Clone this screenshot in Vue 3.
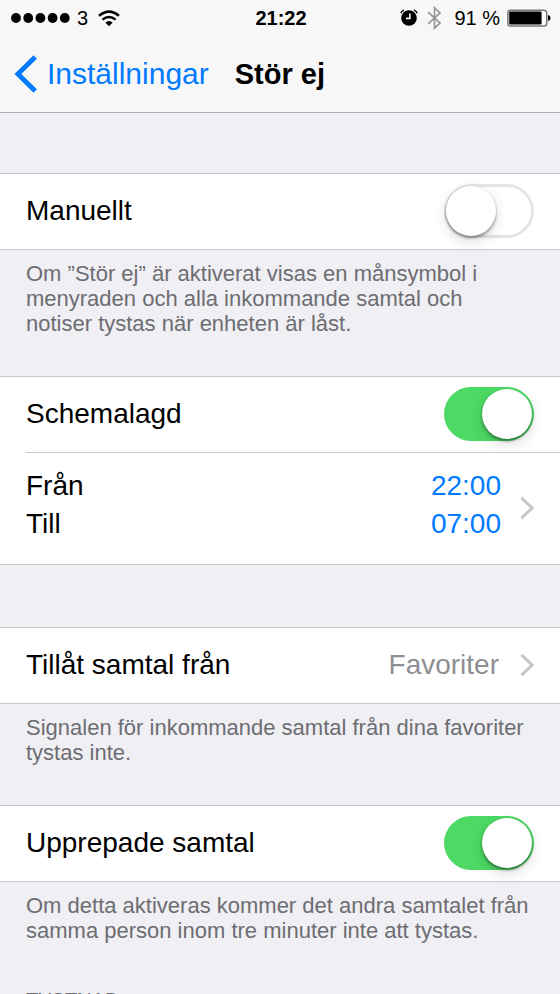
<template>
  <div class="screen">
    <header class="top">
      <div class="status">
        <div class="status-left">
          <svg class="signal" width="59" height="10" viewBox="0 0 59 10">
            <circle v-for="n in 5" :key="n" :cx="5 + (n - 1) * 12.2" cy="5" r="4.9" />
          </svg>
          <span>3</span>
          <svg class="wifi" width="22" height="17" viewBox="0 0 22 17">
            <path d="M1 5.8 Q11 -2.6 21 5.8" fill="none" stroke="#000" stroke-width="2.5" />
            <path d="M4.4 9.6 Q11 4.3 17.6 9.6" fill="none" stroke="#000" stroke-width="2.4" />
            <path d="M7.3 12.4 Q11 9.4 14.7 12.4 L11 16.3 Z" />
          </svg>
        </div>
        <span class="clock">21:22</span>
        <div class="status-right">
          <svg width="18" height="18" viewBox="0 0 18 18">
            <circle cx="9" cy="9" r="7.8" />
            <path d="M.8 4.2 Q1.6 2 4 1.2 M17.2 4.2 Q16.4 2 14 1.2" fill="none" stroke="#000" stroke-width="1.3" />
            <path d="M9.9 4.6 V9.4 H6" fill="none" stroke="#f7f7f8" stroke-width="1.6" />
          </svg>
          <svg class="bluetooth" width="15" height="24" viewBox="0 0 15 24">
            <path d="M1.2 6.2 L13 17 L7.5 22.2 V1.8 L13 7 L1.2 17.8" fill="none" stroke="#97979a" stroke-width="1.7" />
          </svg>
          <span class="percent">91 %</span>
          <svg class="battery" width="44" height="18" viewBox="0 0 44 18">
            <rect x=".9" y="1.2" width="38.8" height="15.8" rx="2.8" fill="#fff" stroke="#777" stroke-width="1.5" />
            <rect x="2.2" y="2.6" width="32.4" height="13" rx="1" />
            <path d="M41 6 Q43.6 6.6 43.6 9 Q43.6 11.4 41 12 Z" />
          </svg>
        </div>
      </div>
      <nav class="nav">
        <a class="back" href="#">
          <svg width="23" height="38" viewBox="0 0 23 38">
            <path d="M21.2 2 L3.9 19 L21.2 36" fill="none" stroke="#007aff" stroke-width="4.8" />
          </svg>
          <span>Inställningar</span>
        </a>
        <h1>Stör ej</h1>
      </nav>
    </header>

    <main class="list">
      <section>
        <div class="group">
          <label class="row">
            <span>Manuellt</span>
            <input v-model="manual" class="switch" type="checkbox" role="switch">
          </label>
        </div>
        <p class="note">Om ”Stör ej” är aktiverat visas en månsymbol i menyraden och alla inkommande samtal och notiser tystas när enheten är låst.</p>
      </section>

      <section>
        <div class="group">
          <label class="row">
            <span>Schemalagd</span>
            <input v-model="scheduled" class="switch" type="checkbox" role="switch">
          </label>
          <button class="row" type="button">
            <span class="lines">
              <span v-for="t in times" :key="t.label" class="line">
                <span>{{ t.label }}</span>
                <span class="time">{{ t.value }}</span>
              </span>
            </span>
            <svg class="chevron" width="14" height="24" viewBox="0 0 14 24">
              <path d="M1.5 1.8 L12 12 L1.5 22.2" fill="none" stroke="#c7c7cc" stroke-width="3" />
            </svg>
          </button>
        </div>
      </section>

      <section>
        <div class="group">
          <button class="row" type="button">
            <span>Tillåt samtal från</span>
            <span class="value">Favoriter</span>
            <svg class="chevron" width="14" height="24" viewBox="0 0 14 24">
              <path d="M1.5 1.8 L12 12 L1.5 22.2" fill="none" stroke="#c7c7cc" stroke-width="3" />
            </svg>
          </button>
        </div>
        <p class="note">Signalen för inkommande samtal från dina favoriter tystas inte.</p>
      </section>

      <section>
        <div class="group">
          <label class="row">
            <span>Upprepade samtal</span>
            <input v-model="repeated" class="switch" type="checkbox" role="switch">
          </label>
        </div>
        <p class="note">Om detta aktiveras kommer det andra samtalet från samma person inom tre minuter inte att tystas.</p>
      </section>

      <h2 class="heading">TYSTNAD</h2>
    </main>
  </div>
</template>

<script setup>
import { ref } from 'vue'

const manual = ref(false)
const scheduled = ref(true)
const repeated = ref(true)

const times = [
  { label: 'Från', value: '22:00' },
  { label: 'Till', value: '07:00' }
]
</script>

<style>
body {
  margin: 0;
  background: #efeff4;
}
</style>

<style scoped>
.screen {
  display: flex;
  flex-direction: column;
  height: 100vh;
  font-family: "Liberation Sans", Arial, sans-serif;
  font-size: 28px;
  color: #000;
  background: #efeff4;
}

.top {
  flex: none;
  background: #f7f7f8;
  border-bottom: 1px solid #b2b2b5;
}

.status {
  display: grid;
  grid-template-columns: 1fr auto 1fr;
  align-items: center;
  height: 36px;
  padding: 0 9px 0 11px;
  font-size: 20px;
}

.status-left,
.status-right {
  display: flex;
  align-items: center;
}

.status-right {
  justify-content: flex-end;
}

.signal {
  margin-right: 7px;
}

.wifi {
  margin-left: 10px;
}

.clock {
  font-weight: bold;
}

.bluetooth {
  margin: 0 12px 0 9px;
}

.battery {
  margin-left: 7px;
}

.nav {
  display: flex;
  align-items: center;
  height: 76px;
  padding-left: 14px;
}

.back {
  display: flex;
  align-items: center;
  gap: 10px;
  font-size: 30px;
  color: #007aff;
  text-decoration: none;
}

h1 {
  margin: 0 0 0 26px;
  font-size: 29px;
}

.list {
  flex: 1;
  min-height: 0;
  padding-top: 60px;
  overflow-y: auto;
  scrollbar-width: none;
}

.group {
  background: #fff;
  border-top: 1px solid #c8c7cc;
  border-bottom: 1px solid #c8c7cc;
}

section + section {
  margin-top: 40px;
}

section:nth-child(3) {
  margin-top: 62px;
}

.row {
  display: flex;
  align-items: center;
  justify-content: space-between;
  box-sizing: border-box;
  width: 100%;
  min-height: 75px;
  padding: 0 26px 1px;
  border: 0;
  background: none;
  font: inherit;
  color: inherit;
  text-align: left;
}

.row + .row {
  position: relative;
}

.row + .row::before {
  content: "";
  position: absolute;
  top: 0;
  left: 26px;
  right: 0;
  height: 1px;
  background: #c8c7cc;
}

.lines {
  flex: 1;
  padding: 15px 0 20px;
}

.line {
  display: flex;
  justify-content: space-between;
  line-height: 38px;
}

.time {
  color: #007aff;
}

.value {
  margin: 0 2px 0 auto;
  color: #8e8e93;
}

.chevron {
  flex: none;
  margin-left: 19px;
}

.switch {
  appearance: none;
  flex: none;
  display: flex;
  box-sizing: border-box;
  width: 90px;
  height: 54px;
  margin: 0;
  padding: 2px;
  border-radius: 27px;
  background: #fff;
  box-shadow: inset 0 0 0 3px #e5e5e5;
}

.switch::before {
  content: "";
  width: 50px;
  height: 50px;
  border-radius: 50%;
  background: #fff;
  box-shadow: 0 2px 3px rgba(0, 0, 0, 0.4), 0 5px 14px rgba(0, 0, 0, 0.14);
}

.switch:checked {
  justify-content: flex-end;
  background: #4cd964;
  box-shadow: none;
}

.note {
  margin: 0;
  padding: 11px 26px 0;
  font-size: 22px;
  line-height: 25px;
  color: #6d6d72;
}

.heading {
  margin: 0;
  padding: 45px 26px 20px;
  font-size: 20px;
  line-height: 25px;
  font-weight: normal;
  color: #6d6d72;
}
</style>
